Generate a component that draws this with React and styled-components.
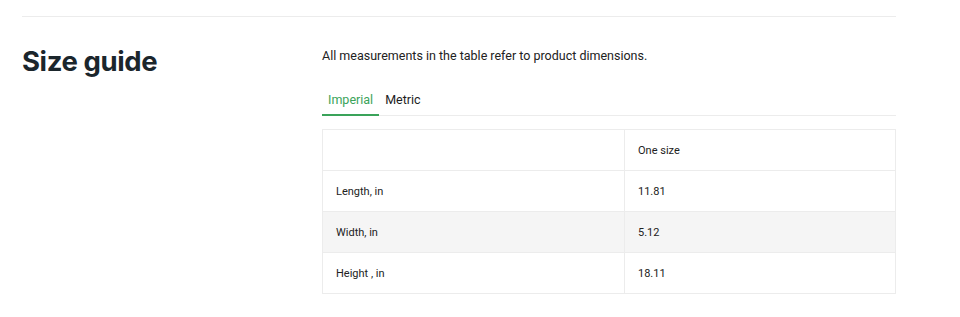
import React, {useState} from 'react';
import styled, {createGlobalStyle} from 'styled-components';

const Global = createGlobalStyle`
  body {
    margin: 0;
    background: #fff;
    font-family: Roboto, "Liberation Sans", sans-serif;
    color: #222;
  }
`;

const Page = styled.div`
  padding: 0 64px 0 22px;
`;

const Divider = styled.hr`
  margin: 16px 0 0;
  border: 0;
  border-top: 1px solid #ececec;
`;

const Section = styled.section`
  display: grid;
  grid-template-columns: 300px 1fr;
  padding-top: 26px;
`;

const Title = styled.h2`
  margin: 0;
  font-family: Inter, "Liberation Sans", sans-serif;
  font-weight: 700;
  font-size: 27.5px;
  letter-spacing: -0.4px;
  line-height: 36px;
  color: #1b262c;
`;

const Intro = styled.p`
  margin: 3px 0 0;
  font-size: 12.5px;
  line-height: 20px;
  color: #222;
`;

const Tabs = styled.div`
  display: flex;
  margin-top: 22px;
  border-bottom: 1px solid #ececec;
`;

const Tab = styled.button`
  background: none;
  border: 0;
  border-bottom: 2px solid ${p => (p.$active ? '#3aa35a' : 'transparent')};
  margin-bottom: -1px;
  padding: 3px 6px 5px;
  font-family: inherit;
  font-size: 12.5px;
  line-height: 18px;
  color: ${p => (p.$active ? '#3aa35a' : '#1d1d1d')};
  cursor: pointer;
`;

const Table = styled.table`
  width: 100%;
  margin-top: 13px;
  border-collapse: collapse;
  table-layout: fixed;
  border: 1px solid #ececec;
  font-size: 11px;
  color: #222;
`;

const Row = styled.tr`
  background: ${p => (p.$shade ? '#f5f5f5' : '#fff')};
  & + & {
    border-top: 1px solid #ececec;
  }
`;

const Cell = styled.td`
  width: ${p => p.$w || 'auto'};
  height: 40px;
  padding: 0 13px;
  & + & {
    border-left: 1px solid #ececec;
  }
`;

const rows = {
  imperial: [
    ['Length, in', '11.81'],
    ['Width, in', '5.12'],
    ['Height , in', '18.11'],
  ],
  metric: [
    ['Length, cm', '30'],
    ['Width, cm', '13'],
    ['Height , cm', '46'],
  ],
};

export default function App() {
  const [unit, setUnit] = useState('imperial');

  return (
    <Page>
      <Global />
      <Divider />
      <Section>
        <Title>Size guide</Title>
        <div>
          <Intro>All measurements in the table refer to product dimensions.</Intro>
          <Tabs>
            <Tab $active={unit === 'imperial'} onClick={() => setUnit('imperial')}>Imperial</Tab>
            <Tab $active={unit === 'metric'} onClick={() => setUnit('metric')}>Metric</Tab>
          </Tabs>
          <Table>
            <tbody>
              <Row>
                <Cell $w="275px" />
                <Cell>One size</Cell>
              </Row>
              {rows[unit].map(([label, value], i) => (
                <Row key={label} $shade={i === 1}>
                  <Cell>{label}</Cell>
                  <Cell>{value}</Cell>
                </Row>
              ))}
            </tbody>
          </Table>
        </div>
      </Section>
    </Page>
  );
}
